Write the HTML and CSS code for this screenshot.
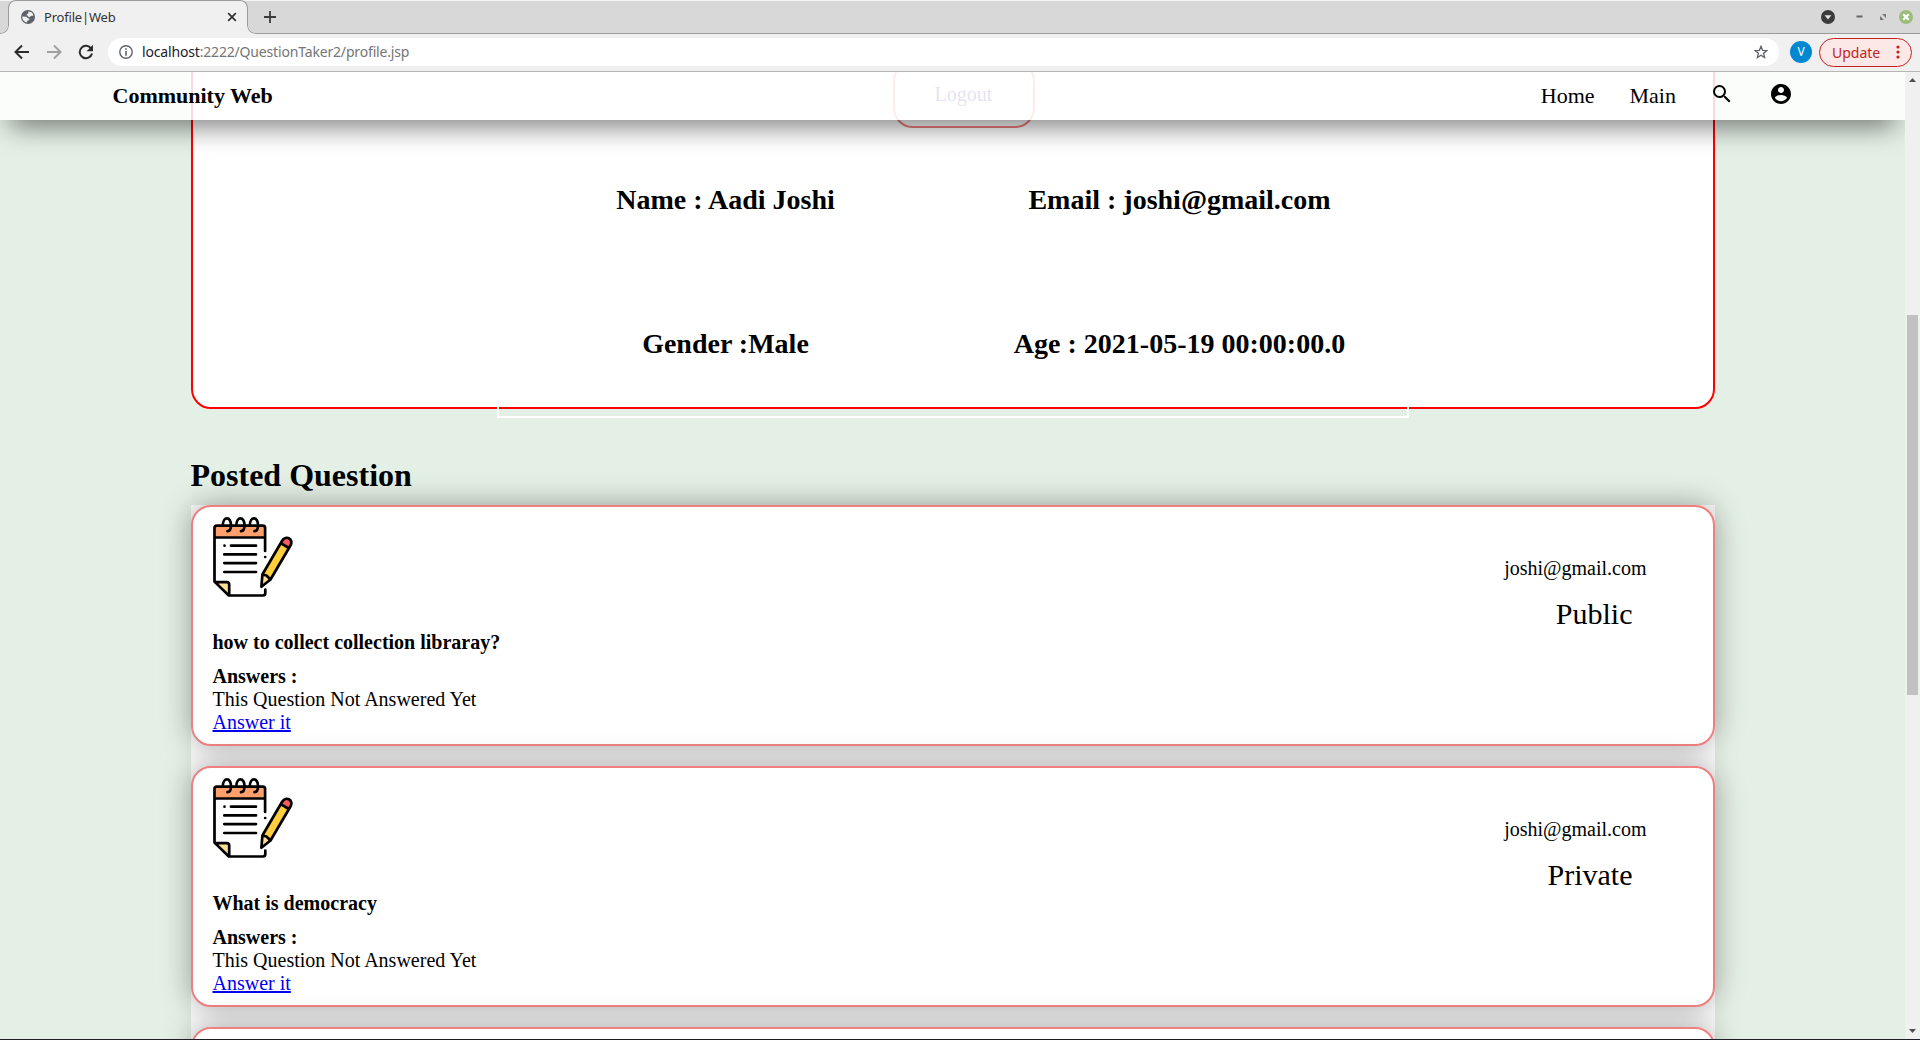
FILE: index.html
```
<!DOCTYPE html>
<html lang="en">
<head>
<meta charset="utf-8">
<title>Profile|Web</title>
<link rel="stylesheet" href="styles.css">
</head>
<body>
<svg class="defs" width="0" height="0">
  <symbol id="note" viewBox="13 12 80 80">
    <path d="M15.6 22.8q0-2.2 2.2-2.2h44.900q2.300 0 2.300 2.200v9.800H15.600z" fill="#ff9f6b"/>
    <path d="M15.500 77.200h11.300q2.400 0 2.400 2.400v10.400z" fill="#ffdf95"/>
    <path d="M65.100 46V22.800q0-2.200-2.300-2.200H16.800q-2.300 0-2.300 2.200v53.800L28.800 90.500H63q2.300 0 2.300-2.500v-3.500M14.500 32.500h50.600M15 77.200h11.800q2.400 0 2.400 2.400v10.600" fill="none" stroke="#000" stroke-width="2.700" stroke-linecap="round" stroke-linejoin="round"/>
    <path d="M22.800 20.500c0-9.500 8.500-9.500 8.200 0q0 5.500-3.500 5.600M36.300 20.500c0-9.500 8.500-9.500 8.200 0q0 5.500-3.500 5.600M49.800 20.500c0-9.500 8.500-9.500 8.200 0q0 5.500-3.500 5.600" fill="none" stroke="#000" stroke-width="2.700" stroke-linecap="round"/>
    <path d="M24.500 40.700v.01M31 40.700h25M24.300 49.400H56M24.300 58.100H56M24.300 67H56M65.200 52v.01" fill="none" stroke="#000" stroke-width="2.700" stroke-linecap="round"/>
    <path d="M62.400 69.500 80.700 38.200l8.200 4.800L70.500 74.500z" fill="#ffcf40"/>
    <path d="M80.700 38.200l1.300-2.200c4-6.600 12.300-1.600 8.300 4.700l-1.400 2.300z" fill="#ff5a5f"/>
    <path d="M62.400 69.500l8.100 5-9 7z" fill="#ffdf95"/>
    <path d="M61.400 81.700l1-12.200L82 36c4-6.600 12.300-1.600 8.300 4.700L70.500 74.500zM80.700 38.200l8.200 4.800M62.400 69.500l4 1 4.100 4" fill="none" stroke="#000" stroke-width="2.700" stroke-linecap="round" stroke-linejoin="round"/>
  </symbol>
</svg>
<div class="browser">
  <div class="tabstrip">
    <div class="tab-edge"></div>
    <div class="tab">
      <svg class="globe" width="14" height="14" viewBox="0 0 14 14"><circle cx="7" cy="7" r="7" fill="#5f6368"/><path d="M1.300 6.500l4.200.2 1.300 1.500 1.500.2-.3 1.800-1.800.5-.2 1.900q-3.800-.8-4.700-4.300zM7.200 1.400l3.300.8 1.800 2.400-.6 1.500-1.700-.4-1 1.300-1.800-.2-.4-1.300-1.300-.3.4-1.200 1.500-.3z" fill="#f0f0f0"/></svg>
      <span class="tab-title">Profile|Web</span>
      <svg class="close" width="10" height="10" viewBox="0 0 10 10"><path d="M1.200 1.200l7.600 7.600M8.800 1.200L1.200 8.800" stroke="#333" stroke-width="1.700"/></svg>
    </div>
    <svg class="newtab" width="12" height="12" viewBox="0 0 12 12"><path d="M6 0v12M0 6h12" stroke="#3c3c3c" stroke-width="1.800"/></svg>
    <div class="winctl">
      <svg width="14" height="14" viewBox="0 0 14 14"><circle cx="7" cy="7" r="7" fill="#3c3c3c"/><path d="M3.600 5.200h6.800L7 9.600z" fill="#e4e4e4"/></svg>
      <svg width="7" height="14" viewBox="0 0 7 14"><path d="M.5 6.500h6" stroke="#666" stroke-width="2"/></svg>
      <svg width="8" height="14" viewBox="0 0 8 14"><path d="M3 4h4v4zM1 6v4h4z" fill="#777"/></svg>
      <svg width="14" height="14" viewBox="0 0 14 14"><circle cx="7" cy="7" r="7" fill="#9bbd79"/><path d="M4.300 4.300l5.400 5.400M9.700 4.300L4.300 9.700" stroke="#fff" stroke-width="2.200"/></svg>
    </div>
  </div>
  <div class="toolbar">
    <svg class="back" width="16" height="16" viewBox="0 0 16 16"><path d="M15 8H2M8 1.500L1.500 8 8 14.500" fill="none" stroke="#2b2b2b" stroke-width="2"/></svg>
    <svg class="fwd" width="16" height="16" viewBox="0 0 16 16"><path d="M1 8h13M8 1.500L14.500 8 8 14.500" fill="none" stroke="#a0a0a0" stroke-width="2"/></svg>
    <svg class="reload" width="16" height="16" viewBox="0 0 16 16"><path d="M13.200 4.700A6.200 6.200 0 1 0 14 9.500" fill="none" stroke="#2b2b2b" stroke-width="2"/><path d="M15 .8v6.400H8.600z" fill="#2b2b2b"/></svg>
    <div class="omnibox">
      <svg width="14" height="14" viewBox="0 0 14 14"><circle cx="7" cy="7" r="6.200" fill="none" stroke="#5f6368" stroke-width="1.400"/><path d="M7 3.200v1.600M7 6v4.800" stroke="#5f6368" stroke-width="1.600"/></svg>
      <span class="url"><b>localhost</b>:2222/QuestionTaker2/profile.jsp</span>
      <svg class="star" width="14" height="14" viewBox="0 0 14 14"><path d="M7 1.300l1.600 4 4.200.3-3.200 2.700 1 4.200L7 10.200l-3.600 2.300 1-4.200L1.200 5.600l4.200-.3z" fill="none" stroke="#5f6368" stroke-width="1.300"/></svg>
    </div>
    <div class="avatar">V</div>
    <div class="update"><span>Update</span><svg width="4" height="14" viewBox="0 0 4 14"><g fill="#c5221f"><circle cx="2" cy="2" r="1.600"/><circle cx="2" cy="7" r="1.600"/><circle cx="2" cy="12" r="1.600"/></g></svg></div>
  </div>
  <div class="view">
    <div class="page">
      <nav class="nav">
        <span class="brand">Community Web</span>
        <span class="home">Home</span>
        <span class="main">Main</span>
        <svg class="search" width="24" height="24" viewBox="0 0 24 24"><path d="M15.500 14h-.79l-.28-.27A6.471 6.471 0 0 0 16 9.500 6.500 6.500 0 1 0 9.500 16c1.610 0 3.090-.59 4.230-1.570l.27.28v.79l5 4.990L20.490 19l-4.990-5zm-6 0C7.010 14 5 11.990 5 9.500S7.010 5 9.500 5 14 7.010 14 9.500 11.990 14 9.500 14z"/></svg>
        <svg class="account" width="24" height="24" viewBox="0 0 24 24"><path d="M12 2C6.480 2 2 6.480 2 12s4.480 10 10 10 10-4.480 10-10S17.520 2 12 2zm0 3c1.660 0 3 1.340 3 3s-1.340 3-3 3-3-1.340-3-3 1.340-3 3-3zm0 14.200c-2.500 0-4.710-1.280-6-3.220.03-1.990 4-3.080 6-3.080 1.990 0 5.970 1.090 6 3.080-1.290 1.940-3.500 3.220-6 3.220z"/></svg>
      </nav>
      <section class="profile">
        <div class="logout">Logout</div>
        <div class="details">
          <div>Name : Aadi Joshi</div><div>Email : joshi@gmail.com</div>
          <div>Gender :Male</div><div>Age : 2021-05-19 00:00:00.0</div>
        </div>
      </section>
      <h1>Posted Question</h1>
      <section class="posts">
        <article class="post">
          <div class="body">
            <svg class="pic" width="80" height="80"><use href="#note"/></svg>
            <div class="question">how to collect collection libraray?</div>
            <b>Answers :</b>
            <span>This Question Not Answered Yet</span>
            <a href="#">Answer it</a>
          </div>
          <div class="meta"><span>joshi@gmail.com</span><span class="scope">Public</span></div>
        </article>
        <article class="post">
          <div class="body">
            <svg class="pic" width="80" height="80"><use href="#note"/></svg>
            <div class="question">What is democracy</div>
            <b>Answers :</b>
            <span>This Question Not Answered Yet</span>
            <a href="#">Answer it</a>
          </div>
          <div class="meta"><span>joshi@gmail.com</span><span class="scope">Private</span></div>
        </article>
        <article class="post"></article>
      </section>
    </div>
    <div class="scrollbar">
      <svg width="7" height="4" viewBox="0 0 7 4"><path d="M0 4L3.500 0 7 4z" fill="#505050"/></svg>
      <div class="thumb"></div>
      <svg width="7" height="4" viewBox="0 0 7 4"><path d="M0 0h7L3.500 4z" fill="#505050"/></svg>
    </div>
  </div>
</div>
</body>
</html>
```
FILE: styles.css
```
* { box-sizing: border-box; }
body { margin: 0; overflow: hidden; font-family: "Liberation Serif", "Times New Roman", serif; color: #000; }
svg { display: block; flex: none; }
.defs { position: absolute; }

.browser { width: 1920px; height: 1040px; display: flex; flex-direction: column; border-bottom: 1px solid #1d1f24; overflow: hidden; }

/* Tab strip */
.tabstrip { height: 34px; flex: none; display: flex; align-items: flex-start; background: linear-gradient(#f4f4f4 1px, #d8d8d8 1px, #d8d8d8 33px, #9a9a9a 33px); font-family: "Noto Sans", sans-serif; }
.tab-edge { width: 8px; height: 33px; }
.tab { position: relative; width: 240px; height: 34px; display: flex; align-items: center; padding: 0 10px 2px 12px; background: #f0f0f0; border: 1px solid #9a9a9a; border-bottom: 0; border-radius: 8px 8px 0 0; }
.tab::before, .tab::after { content: ""; position: absolute; bottom: 0; width: 8px; height: 8px; }
.tab::before { left: -8px; background: radial-gradient(circle at 0 0, #d8d8d8 6.500px, #9a9a9a 7.200px, #f0f0f0 8px); }
.tab::after { right: -8px; background: radial-gradient(circle at 100% 0, #d8d8d8 6.500px, #9a9a9a 7.200px, #f0f0f0 8px); }
.tab-title { margin-left: 9px; font-size: 13px; letter-spacing: -0.2px; color: #333; white-space: nowrap; }
.close { margin-left: auto; }
.newtab { margin: 11px 0 0 16px; }
.winctl { margin: 10px 7px 0 auto; display: flex; }
.winctl svg:nth-child(2) { margin-left: 21px; }
.winctl svg:nth-child(3) { margin-left: 16px; }
.winctl svg:nth-child(4) { margin-left: 12px; }

/* Address bar */
.toolbar { height: 38px; flex: none; display: flex; align-items: center; padding-bottom: 1px; background: #f0f0f0; border-bottom: 1px solid #b4b6b4; font-family: "Noto Sans", sans-serif; }
.back { margin-left: 14px; }
.fwd { margin-left: 16px; }
.reload { margin-left: 16px; }
.omnibox { width: 1671px; height: 28px; margin-left: 14px; padding: 0 11px; border-radius: 14px; background: #fff; display: flex; align-items: center; }
.url { margin: -1px 0 0 9px; font-size: 14px; letter-spacing: -0.17px; color: #757575; white-space: nowrap; }
.url b { font-weight: 400; color: #202124; }
.star { margin-left: auto; }
.avatar { width: 22px; height: 22px; margin-left: 11px; border-radius: 50%; background: #0288d1; color: #fff; font-size: 12px; line-height: 22px; text-align: center; }
.update { width: 93px; height: 29px; margin-left: 7px; padding: 0 11px 0 12px; border: 1px solid #c5221f; border-radius: 15px; background: #fce8e6; color: #c5221f; font-size: 14px; display: flex; align-items: center; justify-content: space-between; }

/* Web page */
.view { flex: 1; min-height: 0; display: flex; }
.page { position: relative; width: 1905px; overflow: hidden; background: #e4efe5; }
.nav { position: absolute; z-index: 2; top: 0; left: 0; right: 0; height: 48px; padding: 0 112px 0 112.500px; display: flex; align-items: center; background: rgba(255,255,255,.85); box-shadow: 0 15px 28px -10px rgba(0,0,0,.58); font-size: 22px; }
.brand { font-weight: 700; margin-right: auto; }
.main { margin-left: 35px; }
.search { margin: -4px 0 0 34px; }
.account { margin: -4px 0 0 35px; }

.profile { width: 1524px; height: 409px; margin: -72px 0 0 190.500px; padding-top: 59px; border: 2px solid #f00; border-radius: 20px; background: #fff; display: flex; flex-direction: column; align-items: center; }
.logout { flex: none; width: 142px; height: 67px; margin-left: 22px; border: 2px solid #f08080; border-radius: 20px; color: #5837af; font-size: 20px; line-height: 63px; text-align: center; }
.details { flex: none; width: 912px; display: grid; grid-template-columns: 1fr 1fr; grid-auto-rows: 144px; place-items: center; border: 2px solid #fff; border-top: 0; font-size: 28px; font-weight: 700; }

h1 { margin: 48px 0 11px 190.500px; font-size: 32px; line-height: 37px; }
.posts { width: 1524px; margin-left: 190.500px; background: #fff; display: flex; flex-direction: column; gap: 20px; }
.post { height: 241px; padding: 10px 20px; border: 2px solid #f08080; border-radius: 20px; background: #fff; box-shadow: 0 0 30px rgba(0,0,0,.35); display: flex; justify-content: space-between; font-size: 20px; line-height: 23px; }
.body { display: flex; flex-direction: column; align-items: flex-start; }
.question { margin: 34px 0 11px; font-weight: 700; }
a { color: #00e; }
.meta { display: flex; flex-direction: column; align-items: flex-end; padding: 40px 46px 0 0; }
.scope { margin: 17px 14px 0 0; font-size: 30px; line-height: 34px; }

/* Scrollbar */
.scrollbar { width: 15px; background: #f0f0f0; display: flex; flex-direction: column; align-items: center; padding: 6px 0; }
.thumb { width: 11px; height: 380px; margin: 233px 0 auto; background: #c1c1c1; }
```
